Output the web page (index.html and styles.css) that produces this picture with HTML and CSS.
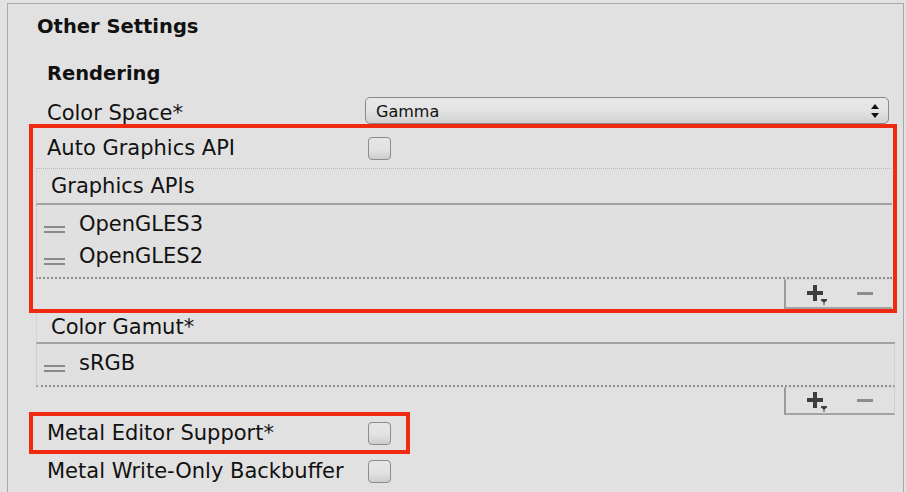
FILE: index.html
```html
<!DOCTYPE html>
<html>
<head>
<meta charset="utf-8">
<link rel="stylesheet" href="styles.css">
</head>
<body>
<div class="panel">
  <div class="title">Other Settings</div>
  <div class="section-head">Rendering</div>
  <div class="row row-select">
    <span class="label">Color Space*</span>
    <div class="select">
      <span class="select-text">Gamma</span>
      <svg class="select-arrows" width="8" height="14" viewBox="0 0 8 14"><path d="M4 0L8 5H0z M0 9H8L4 14z" fill="#111"/></svg>
    </div>
  </div>

  <div class="highlight hl-wide">
    <div class="row row-check"><span class="label">Auto Graphics API</span><span class="checkbox"></span></div>
    <div class="list list-apis">
      <div class="list-head">Graphics APIs</div>
      <div class="list-body body-apis">
        <div class="item"><span class="handle"></span><span>OpenGLES3</span></div>
        <div class="item"><span class="handle"></span><span>OpenGLES2</span></div>
      </div>
      <div class="list-foot">
        <div class="foot-btns">
          <svg class="plus" width="22" height="20" viewBox="0 0 22 20"><path d="M0 6h16v4H0z M6 0h4v16H6z" fill="#3e3e3e"/><path d="M14 14h6v1.5l-2.5 2v2.5h-1v-2.5l-2.5-2z" fill="#3e3e3e"/></svg>
          <span class="minus"></span>
        </div>
      </div>
    </div>
  </div>

  <div class="list list-gamut">
    <div class="list-head head-gamut">Color Gamut*</div>
    <div class="list-body body-gamut">
      <div class="item"><span class="handle"></span><span>sRGB</span></div>
    </div>
    <div class="list-foot">
      <div class="foot-btns foot-gamut">
        <svg class="plus" width="22" height="20" viewBox="0 0 22 20"><path d="M0 6h16v4H0z M6 0h4v16H6z" fill="#3e3e3e"/><path d="M14 14h6v1.5l-2.5 2v2.5h-1v-2.5l-2.5-2z" fill="#3e3e3e"/></svg>
        <span class="minus"></span>
      </div>
    </div>
  </div>

  <div class="highlight hl-narrow">
    <div class="row row-check row-metal"><span class="label">Metal Editor Support*</span><span class="checkbox"></span></div>
  </div>
  <div class="row row-check row-last"><span class="label">Metal Write-Only Backbuffer</span><span class="checkbox"></span></div>
</div>
</body>
</html>
```

FILE: styles.css
```css
html, body {
  margin: 0;
  padding: 0;
  background: #e2e2e2;
  overflow: hidden;
}
body {
  font-family: "DejaVu Sans", "Liberation Sans", sans-serif;
  font-size: 21px;
  color: #111;
  width: 906px;
  height: 492px;
}
.panel {
  box-sizing: border-box;
  margin: 3px 0 0 7px;
  width: 897px;
  height: 489px;
  overflow: hidden;
  border: 1px solid #a9a9a9;
  border-bottom: none;
  background: #e1e1e1;
}
.title {
  height: 46px;
  line-height: 46px;
  padding-left: 29px;
  font-weight: bold;
  font-size: 19.5px;
}
.section-head {
  height: 46px;
  line-height: 48px;
  padding-left: 39px;
  font-weight: bold;
  font-size: 19.5px;
}
.row {
  display: flex;
  align-items: center;
  padding-left: 39px;
}
.label {
  flex: none;
  white-space: nowrap;
}
.row-select {
  height: 28px;
  padding-right: 14px;
}
.row-select .label {
  width: 318px;
  padding-top: 5px;
}
.select {
  flex: 1;
  box-sizing: border-box;
  height: 27px;
  margin-top: 1px;
  border: 1.5px solid #8a8a8a;
  border-radius: 5px;
  background: linear-gradient(#e8e8e8 0%, #e4e4e4 45%, #d2d2d2 100%);
  display: flex;
  align-items: center;
  justify-content: space-between;
  padding: 0 9px 0 10px;
  font-size: 16px;
}
.select-text {
  line-height: 22px;
  padding-top: 2px;
}
.row-check .label {
  width: 321px;
}
.checkbox {
  display: block;
  box-sizing: border-box;
  width: 23px;
  height: 23px;
  border: 1.5px solid #8c8c8c;
  border-radius: 4px;
  background: linear-gradient(#e6e6e6 0%, #e2e2e2 55%, #cdcdcd 100%);
}
.highlight {
  border: 4px solid #f02a10;
  margin-left: 21px;
}
.hl-wide {
  margin-right: 6px;
}
.hl-wide .row-check {
  height: 40px;
  padding-left: 14px;
}
.hl-narrow {
  width: 381px;
  box-sizing: border-box;
  margin-top: -3px;
}
.row-metal {
  height: 34px;
  padding-left: 14px;
}
.row-last {
  height: 34px;
}
.list-apis {
  margin: 0 1px 0 3px;
}
.list-gamut {
  margin: 0 8px 0 28px;
}
.list-head {
  box-sizing: border-box;
  height: 37px;
  line-height: 34px;
  padding-left: 14px;
  border-top: 1px dotted #c4b4b4;
  border-left: 1px dotted #cfc2c2;
  border-bottom: 2px solid #a2a2a2;
}
.head-gamut {
  border-top: none;
  height: 31px;
  line-height: 29px;
}
.list-body {
  background: #e0e0e0;
  border-left: 1px dotted #c8bcbc;
  border-bottom: 2px dotted #8f8f8f;
}
.list-gamut .list-body {
  border-right: 1px dotted #c8bcbc;
}
.body-apis {
  padding: 3px 0 5px;
}
.body-gamut {
  padding: 3px 0 6px;
}
.item {
  height: 32px;
  display: flex;
  align-items: center;
  padding-left: 7px;
}
.handle {
  flex: none;
  box-sizing: border-box;
  width: 21px;
  height: 7px;
  border-top: 2px solid #8a8a8a;
  border-bottom: 2px solid #8a8a8a;
  margin: 10px 14px 0 0;
}
.list-foot {
  display: flex;
  justify-content: flex-end;
}
.foot-btns {
  box-sizing: border-box;
  width: 108px;
  height: 30px;
  border-left: 2px solid #9a9a9a;
  border-bottom: 2px solid #a3a3a3;
  border-top: 1px dotted #d4c6c6;
  display: flex;
  align-items: center;
  padding-left: 21px;
  padding-top: 2px;
}
.foot-gamut {
  width: 111px;
  height: 28px;
  padding-left: 21px;
  border-right: 1px dotted #c8bcbc;
}
.plus {
  display: block;
  flex: none;
}
.minus {
  display: block;
  width: 16px;
  height: 3px;
  background: #8d8d8d;
  margin-left: 28px;
  margin-top: -2px;
}
```
